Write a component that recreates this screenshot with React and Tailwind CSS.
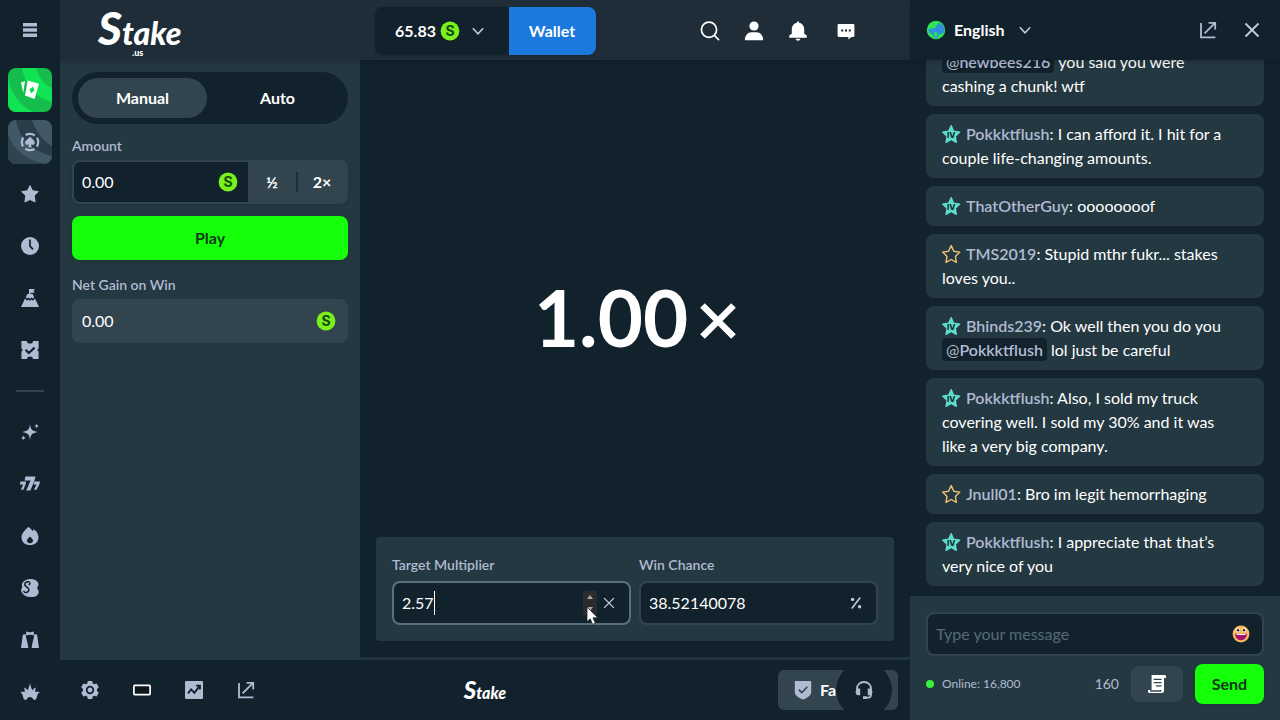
import React, { useState } from 'react';
import clsx from 'clsx';

const Coin = () => (
    <svg viewBox="0 0 20 20" className="size-5 shrink-0" aria-hidden="true">
        <circle cx="10" cy="10" r="9.4" fill="#7af01c" />
        <text x="10" y="15" textAnchor="middle" fontFamily="Inter, sans-serif" fontSize="14" fontWeight="700" fill="#124a14">S</text>
    </svg>
);

const Chevron = () => (
    <svg viewBox="0 0 12 12" className="size-3 shrink-0" fill="none" stroke="#c3cbdf" strokeWidth="1.5" aria-hidden="true">
        <path d="M.8 3.2 6 8.8l5.2-5.6" />
    </svg>
);

const Popout = () => (
    <svg viewBox="0 0 18 18" className="size-[18px]" fill="none" stroke="#b1bad3" strokeWidth="1.8" aria-hidden="true">
        <path d="M2 2v14.4h14.4M5.6 12.4 15.6 2.4M9.6 1.8h6.6v6.6" />
    </svg>
);

const Cross = ({ className }) => (
    <svg viewBox="0 0 16 16" className={className} fill="none" stroke="#c3cbdf" strokeWidth="1.8" aria-hidden="true">
        <path d="m1.5 1.5 13 13m0-13-13 13" />
    </svg>
);

// Small 18px glyphs used by the side navigation
const glyphs = {
    favourites: <path d="m9 .6 2.5 5.2 5.8.8-4.1 4 .9 6.4L9 14.5 3.9 17l.9-6.4-4.1-4 5.8-.8z" strokeLinejoin="round" stroke="#b1bad3" />,
    recent: (
        <>
            <circle cx="9" cy="9" r="9" />
            <path d="M9 2.6v6.6l3 3.2" fill="none" stroke="#12222c" strokeWidth="1.7" />
        </>
    ),
    challenges: (
        <>
            <path d="M8 0h5.800l-1.200 1.900 1.200 1.900H9.500V5h2.200l1.500 3.400-1.300 1.200-1.400-1.200L9 9.700 7.500 8.400 6.100 9.600 4.800 8.400 6.300 5H8z" />
            <path d="m4 9.600 2.100 2.100 1.400-1.300L9 11.700l1.500-1.300 1.400 1.300L14 9.600l4 8.400H0z" />
        </>
    ),
    tickets: (
        <>
            <path d="M.4 0H6a3 2.600 0 0 0 6 0h5.600v7.400a1.700 1.700 0 0 0 0 3.200V18H12a3 2.600 0 0 0-6 0H.4v-7.400a1.700 1.700 0 0 0 0-3.200z" />
            <path d="m4.600 8.800 3.200 3.200 5.800-5.400" fill="none" stroke="#12222c" strokeWidth="2.200" />
        </>
    ),
    fresh: (
        <>
            <path d="M9 1.300c.7 5 2.100 6.800 7.600 7.700-5.500.9-6.900 2.700-7.600 7.700-.7-5-2.100-6.800-7.600-7.700C6.900 8.100 8.300 6.300 9 1.300z" />
            <path d="M15.600.4c.3 1.700.8 2.300 2.600 2.700-1.800.4-2.300 1-2.600 2.700-.3-1.700-.8-2.300-2.600-2.700 1.800-.4 2.300-1 2.600-2.700zM2.400 12.200c.3 1.700.8 2.300 2.600 2.700-1.800.4-2.300 1-2.600 2.700-.3-1.700-.8-2.300-2.600-2.700 1.800-.4 2.300-1 2.600-2.700z" />
        </>
    ),
    hot: (
        <path d="M7.200 0c.5 0 3.300 1.800 4.100 3.900.7-.2 1.200-1 1.300-1.700 2.200 1 4.900 4.500 4.900 8.200 0 4.500-3.700 7.600-8.500 7.600S.5 14.900.5 10.400C.5 6.600 3.700 3.400 7.200 0zM9 9.600c-1.200 1.200-3 2.400-3 4.200 0 1.500 1.200 2.400 3 2.400s3-.9 3-2.400c0-1.800-1.800-3-3-4.200z" />
    ),
    originals: (
        <>
            <path d="M4.500 1.200C8-.6 12.500-.2 15.400 1.700c1.600 1.100 2.400 3 1.900 4.800-.3 1-1.100 1.600-1.100 2.600 0 1.100 1.100 1.700 1.400 2.900.6 2.600-1.300 5-4 5.700-3.400.9-7.200.2-9.800-1.300-2.600-1.400-4.300-4.400-3.300-6.600.4-.9.9-1.300.5-2.600C.3 4.500 2 2.400 4.500 1.200z" />
            <path d="M8.700 3.600C7.300 2 3.500 3 3.700 5.600c.2 2.300 4.300 2.400 4.200 5.300-.1 2.600-4.200 3.700-5.400 1.300M8.700 3.600c.5 1-.1 2-1 2.400" fill="none" stroke="#12222c" strokeWidth="1.500" />
        </>
    ),
    dealers: (
        <>
            <path d="M5.200.4 8 1.300h2l2.800-.9v4.200L10 3.700H8l-2.800.9z" />
            <path d="M1.800 4.200C1.900 3.400 3.600 3 4.600 3.200 5 8 7 12 7.400 17H0zM16.200 4.200c-.1-.8-1.800-1.200-2.800-1C13 8 11 12 10.600 17H18z" />
        </>
    ),
    burst: (
        <path d="M9 .2c.5 2.600 1.200 4.600 2.400 7 1.200-1.200 2-1.900 3.500-2.600-.5 1.700-.7 2.700-.7 4.500 1.500-.4 2.700-.5 4.600-.2-1.700 1.300-2.500 2.700-2.800 4.600-.2 1.700-1 3.500-3.200 3.500-.9-1.900-2.200-3.100-3.800-3.100S6.100 15.100 5.200 17C3 17 2.200 15.200 2 13.500 1.700 11.600.9 10.200-.8 8.900c1.900-.3 3.100-.2 4.600.2 0-1.800-.2-2.800-.7-4.500 1.500.7 2.300 1.400 3.500 2.600C7.800 4.800 8.500 2.800 9 .2z" />
    ),
};

const Glyph = ({ name }) => (
    <svg viewBox="0 0 18 18" className="size-[18px] overflow-visible" fill="#b1bad3" fillRule="evenodd" aria-hidden="true">
        {glyphs[name]}
    </svg>
);

// Reels showing 7 7 7
const SevenGlyph = () => (
    <svg viewBox="0 0 20 16" className="h-4 w-5 overflow-visible" fill="#b1bad3" aria-hidden="true">
        <path d="M.4 5.600h5.800l-.6 2.600-2.200 5.600H.8l2.400-5.400H0zM13.600 5.600H20l-.6 2.600-2.800 5.600H14l2.600-5.400h-3z" />
        <path d="M5.400.6h10l-.7 3.400-4.300 10.400H6.200L10.600 4.600H4.600z" stroke="#12222c" strokeWidth="1" paintOrder="stroke" />
    </svg>
);

const topLinks = ['favourites', 'recent', 'challenges', 'tickets'];
const bottomLinks = ['fresh', 'slots', 'hot', 'originals', 'dealers', 'burst'];

const NavLink = ({ name }) => (
    <a href={`#${name}`} aria-label={name} className="flex size-11 items-center justify-center rounded-lg">
        {name === 'slots' ? <SevenGlyph /> : <Glyph name={name} />}
    </a>
);

const Sidebar = () => (
    <nav className="flex w-15 shrink-0 flex-col items-center overflow-hidden bg-[#12222c]">
        <button type="button" aria-label="Menu" className="flex h-15 w-full shrink-0 items-center justify-center">
            <svg viewBox="0 0 14 14" className="size-3.5" fill="#b1bad3" aria-hidden="true">
                <path d="M0 0h14v3.400H0zM0 5.300h14v3.400H0zM0 10.600h14V14H0z" />
            </svg>
        </button>
        <div className="flex flex-col items-center gap-2 pt-2">
            <a href="#casino" aria-label="Casino" className="size-11 overflow-hidden rounded-lg">
                <svg viewBox="0 0 44 44" className="size-11" aria-hidden="true">
                    <path d="M0 0h44v44H0z" fill="#14bd4c" />
                    <path d="M14 0h14c3 10 9 17 16 20v14C28 30 17 18 14 0zM0 10c3 16 12 28 26 34H0z" fill="#11e454" />
                    <path d="m17 13-4 1.500 2.200 10.500z" fill="#fff" />
                    <path d="m19.800 12.400 11.200 3.400-4.400 15.200-9.600-3.400z" fill="#fff" />
                    <path d="m24.800 18.400 1.800 4-3.400 2.800-1.800-3.800z" fill="#11d950" />
                </svg>
            </a>
            <a href="#social" aria-label="Social casino" className="size-11 overflow-hidden rounded-lg">
                <svg viewBox="0 0 44 44" className="size-11" aria-hidden="true">
                    <path d="M0 0h44v44H0z" fill="#435866" />
                    <path d="M8 0h16c4 12 12 22 20 26v10C26 32 11 20 8 0z" fill="#2a3d49" />
                    <path d="M0 14c5 15 18 27 40 30H0z" fill="#304450" />
                    <circle cx="22" cy="22" r="8.200" fill="none" stroke="#b1bad3" strokeWidth="2.200" strokeDasharray="9.600 3.280" strokeDashoffset="4.800" />
                    <path d="M22 16.500c1.300 2.200 4.800 3.600 4.800 6.200 0 2-2.500 2.800-3.900 1.500l.8 3h-3.400l.8-3c-1.400 1.300-3.900.5-3.900-1.500 0-2.600 3.500-4 4.800-6.200z" fill="#b1bad3" />
                </svg>
            </a>
            {topLinks.map((name) => <NavLink key={name} name={name} />)}
            <hr className="my-2.5 h-0.5 w-7 border-0 bg-[#32454f]" />
            {bottomLinks.map((name) => <NavLink key={name} name={name} />)}
        </div>
    </nav>
);

const iconButton = 'flex size-11 items-center justify-center';

const Header = () => (
    <header className="z-10 grid h-15 shrink-0 grid-cols-[1fr_auto_1fr] items-center bg-[#1e2d37] px-9 shadow-md">
        <a href="#home" aria-label="Stake.us" className="relative flex items-baseline justify-self-start pl-0.5 leading-[56px] font-black text-white italic">
            <span className="text-[46px]">S</span>
            <span className="text-[32px]">take</span>
            <span className="absolute bottom-1 left-9 text-[9px] leading-none not-italic">.us</span>
        </a>
        <div className="flex h-12 overflow-hidden rounded-lg font-bold text-white shadow-sm">
            <button type="button" className="flex w-[134px] items-center justify-center gap-1 bg-[#12222c] pr-1">
                <span>65.83</span>
                <Coin />
                <span className="ml-2"><Chevron /></span>
            </button>
            <button type="button" className="w-[87px] bg-[#1b78dc]">Wallet</button>
        </div>
        <div className="flex justify-end pr-1.5">
            <button type="button" aria-label="Search" className={iconButton}>
                <svg viewBox="0 0 20 20" className="size-5" fill="none" stroke="#fff" strokeWidth="1.700" aria-hidden="true">
                    <circle cx="9" cy="8.800" r="7.600" />
                    <path d="m14.200 14.200 4.800 5" />
                </svg>
            </button>
            <button type="button" aria-label="Account" className={iconButton}>
                <svg viewBox="0 0 20 20" className="size-5" fill="#fff" aria-hidden="true">
                    <circle cx="10" cy="5" r="4.600" />
                    <path d="M.8 19.200c0-4.500 3-8 6.600-8h5.200c3.600 0 6.600 3.500 6.600 8z" />
                </svg>
            </button>
            <button type="button" aria-label="Notifications" className={iconButton}>
                <svg viewBox="0 0 20 20" className="size-5" fill="#fff" aria-hidden="true">
                    <path d="M9 .4h2v1.400c3.200.6 5.200 3.200 5.200 6.400v4.600l2.600 1.800v2.200H1.200v-2.200l2.600-1.800V8.200C3.800 5 5.800 2.400 9 1.800zM7.600 17.800h4.800c-.3 1.300-1.200 2-2.400 2s-2.100-.7-2.400-2z" />
                </svg>
            </button>
            <button type="button" aria-label="Chat" className={clsx(iconButton, 'ml-1')}>
                <svg viewBox="0 0 18 18" className="size-[18px]" aria-hidden="true">
                    <path d="M1.800 2h14.400c.7 0 1.200.5 1.200 1.200v10.600c0 .7-.5 1.200-1.200 1.200h-1.800l-3 2.400V15H1.800c-.7 0-1.200-.5-1.200-1.200V3.200C.6 2.500 1.100 2 1.800 2z" fill="#fff" />
                    <path d="M4.200 7.600h2v2h-2zM8 7.600h2v2H8zM11.800 7.600h2v2h-2z" fill="#12222c" />
                </svg>
            </button>
        </div>
    </header>
);

const BetPanel = () => {
    const [mode, setMode] = useState('Manual');

    return (
        <section className="w-[300px] shrink-0 bg-[#243841] p-3 text-white">
            <div className="flex gap-1.5 rounded-full bg-[#12222c] p-1.5">
                {['Manual', 'Auto'].map((m) => (
                    <button
                        key={m}
                        type="button"
                        onClick={() => setMode(m)}
                        className={clsx('h-10 flex-1 rounded-full font-bold', mode === m && 'bg-[#32454f]')}
                    >
                        {m}
                    </button>
                ))}
            </div>

            <label htmlFor="amount" className="mt-3 mb-1 block text-sm leading-5 font-semibold text-[#b1bad3]">Amount</label>
            <div className="flex h-11 items-stretch overflow-hidden rounded-lg bg-[#32454f] p-0.5 shadow-sm">
                <div className="flex min-w-0 flex-1 items-center rounded-l-md bg-[#12222c] pr-2.5 pl-2">
                    <input id="amount" defaultValue="0.00" className="min-w-0 flex-1 outline-none" />
                    <Coin />
                </div>
                <button type="button" className="w-12 font-bold">½</button>
                <span className="my-2.5 w-0.5 bg-[#1c2d37]" />
                <button type="button" className="w-12 font-bold">2×</button>
            </div>

            <button type="button" className="mt-3 h-11 w-full rounded-lg bg-[#16ff0a] font-bold text-[#0b3a12] shadow-sm">Play</button>

            <label htmlFor="gain" className="mt-[15px] mb-1 block text-sm leading-5 font-semibold text-[#b1bad3]">Net Gain on Win</label>
            <div className="flex h-11 items-center rounded-lg bg-[#32454f] pr-3 pl-2.5">
                <input id="gain" readOnly value="0.00" className="min-w-0 flex-1 outline-none" />
                <Coin />
            </div>
        </section>
    );
};

const Pointer = () => (
    <svg viewBox="0 0 12 18" className="absolute top-4 left-1 h-[18px] w-3 overflow-visible" fill="#fff" stroke="#1b242b" strokeWidth=".8" aria-hidden="true">
        <path d="M0 0v14.800l3.200-3 2.400 5.600 2.800-1.200-2.400-5.400h4.800z" />
    </svg>
);

const GameArea = () => (
    <section className="flex min-w-0 flex-1 flex-col border-b-3 border-[#22343e] bg-[#12222c] p-4 text-white">
        <div className="flex flex-1 items-center justify-center pt-5 font-bold">
            <span className="text-[78px] leading-none">1.00</span>
            <svg viewBox="0 0 36 36" className="mt-2 ml-3 size-9" fill="none" stroke="#fff" strokeWidth="6.500" role="img" aria-label="×">
                <path d="m2.500 2.500 31 31m0-31-31 31" />
            </svg>
        </div>
        <div className="grid grid-cols-2 gap-2 rounded-sm bg-[#243841] p-4">
            <div>
                <label htmlFor="target" className="mb-1 block text-sm leading-6 font-semibold text-[#b1bad3]">Target Multiplier</label>
                <div className="flex h-11 items-center rounded-lg border-2 border-[#5a707e] bg-[#12222c] px-2">
                    <input id="target" defaultValue="2.57" className="[field-sizing:content] outline-none" />
                    <span className="h-6 w-px bg-white" />
                    <span className="flex-1" />
                    <span className="relative flex h-6 w-3.5 flex-col bg-[#2b2b2b]">
                        <button type="button" aria-label="Increase" className="flex flex-1 items-center justify-center">
                            <svg viewBox="0 0 6 4" className="h-1 w-1.5" fill="#a8a8a8" aria-hidden="true"><path d="M3 0 6 4H0z" /></svg>
                        </button>
                        <button type="button" aria-label="Decrease" className="flex flex-1 items-center justify-center">
                            <svg viewBox="0 0 6 4" className="h-1 w-1.5" fill="#a8a8a8" aria-hidden="true"><path d="M0 0h6L3 4z" /></svg>
                        </button>
                        <Pointer />
                    </span>
                    <button type="button" aria-label="Clear" className="flex w-6 justify-center">
                        <Cross className="size-3" />
                    </button>
                </div>
            </div>
            <div>
                <label htmlFor="chance" className="mb-1 block text-sm leading-6 font-semibold text-[#b1bad3]">Win Chance</label>
                <div className="flex h-11 items-center rounded-lg border-2 border-[#32454f] bg-[#12222c] px-2">
                    <input id="chance" defaultValue="38.52140078" className="min-w-0 flex-1 outline-none" />
                    <svg viewBox="0 0 12 12" className="mr-1.5 size-3" fill="#c3cbdf" aria-hidden="true">
                        <path d="M10.200.5 1.800 11.500" stroke="#c3cbdf" strokeWidth="1.600" />
                        <circle cx="2.600" cy="2.400" r="1.700" />
                        <circle cx="9.600" cy="9.800" r="1.700" />
                    </svg>
                </div>
            </div>
        </div>
    </section>
);

const footerButton = 'flex size-9 items-center justify-center';

const Footer = () => (
    <footer className="relative grid h-15 shrink-0 grid-cols-[1fr_auto_1fr] items-center bg-[#12222c] px-3 text-white">
        <div className="flex gap-4">
            <button type="button" aria-label="Settings" className={footerButton}>
                <svg viewBox="0 0 18 18" className="size-[18px]" aria-hidden="true">
                    <path d="M6.800 0h4.400l.5 2.400 1.500.9 2.400-.8 2.200 3.800L16 8v2l1.800 1.700-2.200 3.800-2.400-.8-1.500.9-.5 2.400H6.800l-.5-2.400-1.500-.9-2.400.8-2.200-3.800L2 10V8L.2 6.300l2.200-3.800 2.400.8 1.500-.9z" fill="#b1bad3" />
                    <circle cx="9" cy="9" r="3.300" fill="none" stroke="#12222c" strokeWidth="1.800" />
                </svg>
            </button>
            <button type="button" aria-label="Theatre mode" className={footerButton}>
                <svg viewBox="0 0 18 18" className="size-[18px]" aria-hidden="true">
                    <rect x=".9" y="4.400" width="16.200" height="9.200" rx=".8" fill="#0b161d" stroke="#fff" strokeWidth="1.700" />
                </svg>
            </button>
            <button type="button" aria-label="Live stats" className={footerButton}>
                <svg viewBox="0 0 18 18" className="size-[18px]" aria-hidden="true">
                    <rect width="18" height="18" rx="1" fill="#b1bad3" />
                    <path d="m3 12.400 3.200-4 3.200 3.400 5-6.400M11 4.600h4v4" fill="none" stroke="#12222c" strokeWidth="1.900" />
                </svg>
            </button>
            <button type="button" aria-label="Pop out" className={footerButton}><Popout /></button>
        </div>
        <a href="#home" aria-label="Stake" className="flex items-baseline font-black italic">
            <span className="text-2xl">S</span>
            <span className="text-base">take</span>
        </a>
        <button type="button" className="flex h-10 w-30 items-center gap-2 justify-self-end rounded-md bg-[#32454f] pl-4 font-bold">
            <svg viewBox="0 0 18 20" className="h-5 w-[18px]" aria-hidden="true">
                <path d="M1.500 1h15c.4 0 .7.300.7.7v10.500c0 3-4 5.600-8.200 7.400-4.200-1.800-8.200-4.400-8.200-7.400V1.700c0-.4.300-.7.700-.7z" fill="#b1bad3" />
                <path d="m4.800 9.600 3 3 5.600-5.800" fill="none" stroke="#32454f" strokeWidth="1.600" />
            </svg>
            <span>Fairness</span>
        </button>
        <button type="button" aria-label="Support" className="absolute right-[18px] flex size-14 items-center justify-center rounded-full bg-[#12222c]">
            <svg viewBox="0 0 18 18" className="size-[18px]" aria-hidden="true">
                <path d="M2 9V7.600C2 3.800 5 1 9 1s7 2.800 7 6.600v6.200c0 1.600-1 2.800-2.600 2.800H10" fill="none" stroke="#b1bad3" strokeWidth="1.800" />
                <path d="M1.600 7.600h3.600v6.600H3.400C1.400 14.200.6 12.800.6 11zM16.400 7.600h-3.600v6.600h1.800c2 0 2.800-1.400 2.800-3.200zM8 15.200h4V18H8z" fill="#b1bad3" />
            </svg>
        </button>
    </footer>
);

const STAR = 'm9.200.6 2.600 5.600 6 .9-4.400 4.300 1 6-5.200-2.900L4 17.400l1-6L.6 7.100l6-.9z';

const Badge = ({ type }) => (
    <svg viewBox="0 0 18 18" className="mr-1.5 inline size-[18px] overflow-visible align-[-3px]" aria-hidden="true">
        {type === 'platinum' ? (
            <>
                <path d={STAR} fill="#62dbce" stroke="#62dbce" strokeWidth="1.200" strokeLinejoin="round" />
                <text x="9.200" y="12.600" textAnchor="middle" fontFamily="Inter, sans-serif" fontSize="8" fontWeight="800" fill="#142831">IV</text>
            </>
        ) : (
            <path d={STAR} fill="none" stroke="#f0c077" strokeWidth="1.400" strokeLinejoin="round" />
        )}
    </svg>
);

const Mention = ({ name }) => (
    <span className="mr-1 rounded-sm bg-[#12222c] px-1 py-0.5 text-[#b1bad3]">@<b className="font-semibold">{name}</b></span>
);

const messages = [
    { mention: 'newbees216', text: 'you said you were cashing a chunk! wtf' },
    { badge: 'platinum', user: 'Pokkktflush', text: 'I can afford it. I hit for a couple life-changing amounts.' },
    { badge: 'platinum', user: 'ThatOtherGuy', text: 'oooooooof' },
    { badge: 'bronze', user: 'TMS2019', text: 'Stupid mthr fukr... stakes loves you..' },
    { badge: 'platinum', user: 'Bhinds239', before: 'Ok well then you do you ', mention: 'Pokkktflush', text: 'lol just be careful' },
    { badge: 'platinum', user: 'Pokkktflush', text: 'Also, I sold my truck covering well. I sold my 30% and it was like a very big company.' },
    { badge: 'bronze', user: 'Jnull01', text: 'Bro im legit hemorrhaging' },
    { badge: 'platinum', user: 'Pokkktflush', text: 'I appreciate that that’s very nice of you' },
];

const Chat = () => (
    <aside className="flex w-[370px] shrink-0 flex-col bg-[#12222c] text-white">
        <header className="z-10 flex h-15 shrink-0 items-center bg-[#12222c] pr-2 pl-4 shadow-md">
            <button type="button" className="flex items-center gap-2 font-bold">
                <svg viewBox="0 0 20 20" className="size-5" aria-hidden="true">
                    <circle cx="10" cy="10" r="9.200" fill="#2fe452" />
                    <path d="M13 2.400c2 1 4.600 3 5.600 6 .2 1.600-.4 3.400-1.200 4.600l-4.200 1.600-2.400 4.400-3-1.600-1.600-3.400L3 12.600l-.8-3.400 4-.6 3.400-1.200 1.400-2.600z" fill="#3190dc" />
                    <path d="m8.200 12 3.600 1-1.600 4.800c-1.600-1-2.600-3-2-5.800z" fill="#2fe452" />
                </svg>
                <span>English</span>
                <span className="ml-1.5"><Chevron /></span>
            </button>
            <button type="button" aria-label="Pop out chat" className="ml-auto flex size-10 items-center justify-center"><Popout /></button>
            <button type="button" aria-label="Close chat" className="ml-1 flex size-10 items-center justify-center"><Cross className="size-4" /></button>
        </header>
        <ul className="flex min-h-0 flex-1 flex-col justify-end gap-2 overflow-hidden px-4 pb-2.5">
            {messages.map((m, idx) => (
                <li key={idx} className="shrink-0 rounded-lg bg-[#243841] py-2 pr-7 pl-4 leading-6">
                    {m.user && (
                        <>
                            <Badge type={m.badge} />
                            <b className="font-semibold text-[#b1bad3]">{m.user}</b>:{' '}
                        </>
                    )}
                    {m.before}
                    {m.mention && <Mention name={m.mention} />}
                    {m.text}
                </li>
            ))}
        </ul>
        <form className="shrink-0 bg-[#243841] p-4" onSubmit={(e) => e.preventDefault()}>
            <div className="flex h-11 items-center rounded-lg border-2 border-[#32454f] bg-[#12222c] pr-3 pl-2">
                <input aria-label="Message" placeholder="Type your message" className="min-w-0 flex-1 outline-none placeholder:text-[#566a77]" />
                <button type="button" aria-label="Emoji">
                    <svg viewBox="0 0 18 18" className="size-[18px]" aria-hidden="true">
                        <circle cx="9" cy="9" r="8.400" fill="#f9b95e" />
                        <circle cx="5.800" cy="5.200" r="2" fill="#fff" />
                        <circle cx="12.200" cy="5.200" r="2" fill="#fff" />
                        <circle cx="6" cy="5.200" r="1.200" fill="#222" />
                        <circle cx="12" cy="5.200" r="1.200" fill="#222" />
                        <path d="M3.200 8.800h11.600c0 4-2.400 6.400-5.800 6.400s-5.800-2.400-5.800-6.400z" fill="#a5126d" />
                        <path d="M4.600 8.800h8.800v1.200H4.600z" fill="#fff" />
                    </svg>
                </button>
            </div>
            <div className="mt-2 flex h-10 items-center text-[#b1bad3]">
                <span className="mr-2 size-2 rounded-full bg-[#38f23a]" />
                <span className="text-xs">Online: 16,800</span>
                <span className="mr-3 ml-auto text-sm">160</span>
                <button type="button" aria-label="Chat rules" className="mr-3 flex h-9 w-13 items-center justify-center rounded-lg bg-[#32454f]">
                    <svg viewBox="0 0 18 18" className="size-[18px]" aria-hidden="true">
                        <path d="M3.600 0h13c1 0 1.400.6 1.400 1.400V3h-2v13c0 1.200-.8 2-2 2H1.600C.6 18 0 17.200 0 16.200V15h3.600z" fill="#fff" />
                        <path d="M5.600 4.400h8M5.600 7.600h8M8 10.800h5.600M2 16h10.600v-1" fill="none" stroke="#32454f" strokeWidth="1.300" />
                    </svg>
                </button>
                <button type="submit" className="h-10 w-[69px] rounded-lg bg-[#16ff0a] font-bold text-[#0b3a12] shadow-sm">Send</button>
            </div>
        </form>
    </aside>
);

const App = () => (
    <div className="flex h-screen overflow-hidden bg-[#12222c] font-['Lato',sans-serif] text-base">
        <Sidebar />
        <main className="flex min-w-0 flex-1 flex-col">
            <Header />
            <div className="flex min-h-0 flex-1">
                <BetPanel />
                <GameArea />
            </div>
            <Footer />
        </main>
        <Chat />
    </div>
);

export default App;
